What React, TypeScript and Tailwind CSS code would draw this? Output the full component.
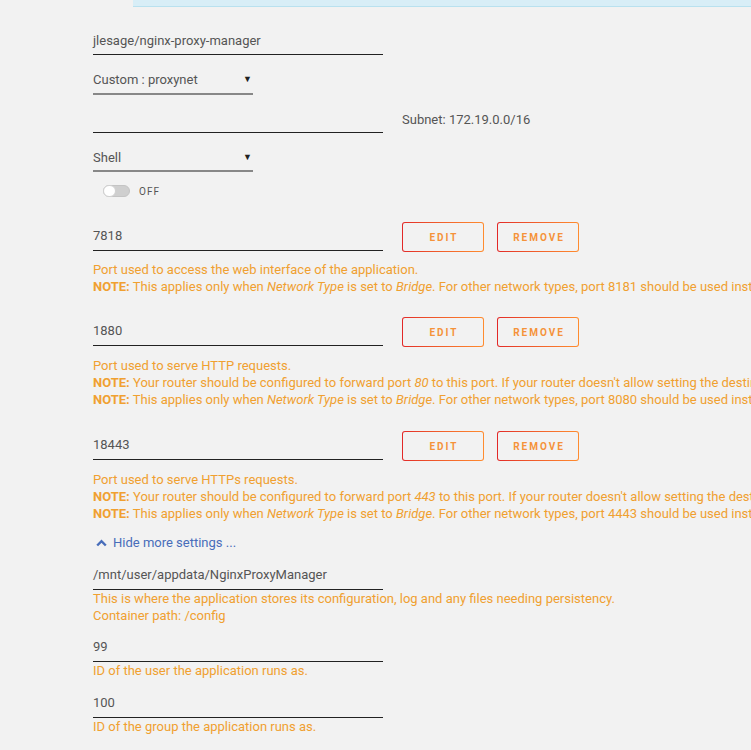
import React from "react";

const font = { fontFamily: "Roboto, 'Liberation Sans', sans-serif" };

function Btn({ label }: { label: string }) {
  return (
    <div className="rounded-[3px] bg-gradient-to-r from-[#e22828] to-[#ff8c2f] p-px w-[82px] h-[30px]">
      <div className="w-full h-full rounded-[2px] bg-[#f2f2f2] flex items-center justify-center">
        <span className="text-[10px] font-bold tracking-[2px] text-[#f5923a] pl-[2px]">{label}</span>
      </div>
    </div>
  );
}

function Note({ children }: { children: React.ReactNode }) {
  return (
    <div className="whitespace-nowrap">
      <b className="font-bold">NOTE:</b> {children}
    </div>
  );
}

function PortRow({ value }: { value: string }) {
  return (
    <div className="flex items-start h-[30px]">
      <div className="w-[290px] h-[29px] border-b border-[#222] flex items-center text-[#555] text-[13px]">{value}</div>
      <div className="ml-[19px] flex gap-[13px]">
        <Btn label="EDIT" />
        <Btn label="REMOVE" />
      </div>
    </div>
  );
}

export default function App() {
  return (
    <div className="w-[751px] h-[750px] overflow-hidden bg-[#f2f2f2] relative" style={font}>
      <div className="ml-[133px] h-[7px] bg-[#d8eef7] border-b border-[#b9e1ef]" />
      <div className="pl-[93px] pt-[21px] text-[13px]">
        <div className="w-[290px] h-[27px] border-b border-[#222] flex items-center text-[#555]">jlesage/nginx-proxy-manager</div>
        <div className="mt-[12px] w-[160px] h-[28px] border-b-2 border-[#888] flex items-center justify-between text-[#555]">
          <span>Custom : proxynet</span>
          <span className="text-[9px] text-[#222] mr-[1px]">▼</span>
        </div>
        <div className="mt-[12px] flex items-center h-[26px]">
          <div className="w-[290px] h-[26px] border-b border-[#222]" />
          <span className="ml-[19px] text-[#555] -mt-[1px]">Subnet: 172.19.0.0/16</span>
        </div>
        <div className="mt-[12px] w-[160px] h-[27px] border-b-2 border-[#888] flex items-center justify-between text-[#555]">
          <span>Shell</span>
          <span className="text-[9px] text-[#222] mr-[1px]">▼</span>
        </div>
        <div className="mt-[13px] flex items-center h-[12px] ml-[10px]">
          <div className="w-[27px] h-[12px] rounded-full bg-[#cfcfcf] border border-[#c4c4c4] relative">
            <div className="absolute left-[-1px] top-[-1px] w-[13px] h-[12px] rounded-full bg-white border border-[#d0d0d0]" />
          </div>
          <span className="ml-[9px] text-[10px] tracking-[1px] text-[#555]">OFF</span>
        </div>

        <div className="mt-[25px]">
          <PortRow value="7818" />
        </div>
        <div className="mt-[9px] leading-[17px] text-[#f0a030] text-[13px]">
          <div>Port used to access the web interface of the application.</div>
          <Note>
            This applies only when <i>Network Type</i> is set to <i>Bridge</i>. For other network types, port 8181 should be used instead.
          </Note>
        </div>

        <div className="mt-[22px]">
          <PortRow value="1880" />
        </div>
        <div className="mt-[10px] leading-[17px] text-[#f0a030] text-[13px]">
          <div>Port used to serve HTTP requests.</div>
          <Note>
            Your router should be configured to forward port <i>80</i> to this port. If your router doesn't allow setting the destination port, then the external port must be the same.
          </Note>
          <Note>
            This applies only when <i>Network Type</i> is set to <i>Bridge</i>. For other network types, port 8080 should be used instead.
          </Note>
        </div>

        <div className="mt-[23px]">
          <PortRow value="18443" />
        </div>
        <div className="mt-[10px] leading-[17px] text-[#f0a030] text-[13px]">
          <div>Port used to serve HTTPs requests.</div>
          <Note>
            Your router should be configured to forward port <i>443</i> to this port. If your router doesn't allow setting the destination port, then the external port must be the same.
          </Note>
          <Note>
            This applies only when <i>Network Type</i> is set to <i>Bridge</i>. For other network types, port 4443 should be used instead.
          </Note>
        </div>

        <div className="mt-[12px] leading-[17px] flex items-center text-[#486dba]">
          <svg width="11" height="8" viewBox="0 0 11 8" className="ml-[3px]">
            <path d="M1.2 6.5 L5.5 2.2 L9.8 6.5" fill="none" stroke="#486dba" strokeWidth="2.4" />
          </svg>
          <span className="ml-[6px]">Hide more settings ...</span>
        </div>

        <div className="mt-[12px] w-[290px] h-[27px] pb-[2px] border-b border-[#222] flex items-center text-[#555]">/mnt/user/appdata/NginxProxyManager</div>
        <div className="leading-[17px] text-[#f0a030]">
          <div>This is where the application stores its configuration, log and any files needing persistency.</div>
          <div>Container path: /config</div>
        </div>

        <div className="mt-[11px] w-[290px] h-[27px] pb-[2px] border-b border-[#222] flex items-center text-[#555]">99</div>
        <div className="leading-[17px] text-[#f0a030]">ID of the user the application runs as.</div>

        <div className="mt-[12px] w-[290px] h-[27px] pb-[2px] border-b border-[#222] flex items-center text-[#555]">100</div>
        <div className="leading-[17px] text-[#f0a030]">ID of the group the application runs as.</div>
      </div>
    </div>
  );
}
